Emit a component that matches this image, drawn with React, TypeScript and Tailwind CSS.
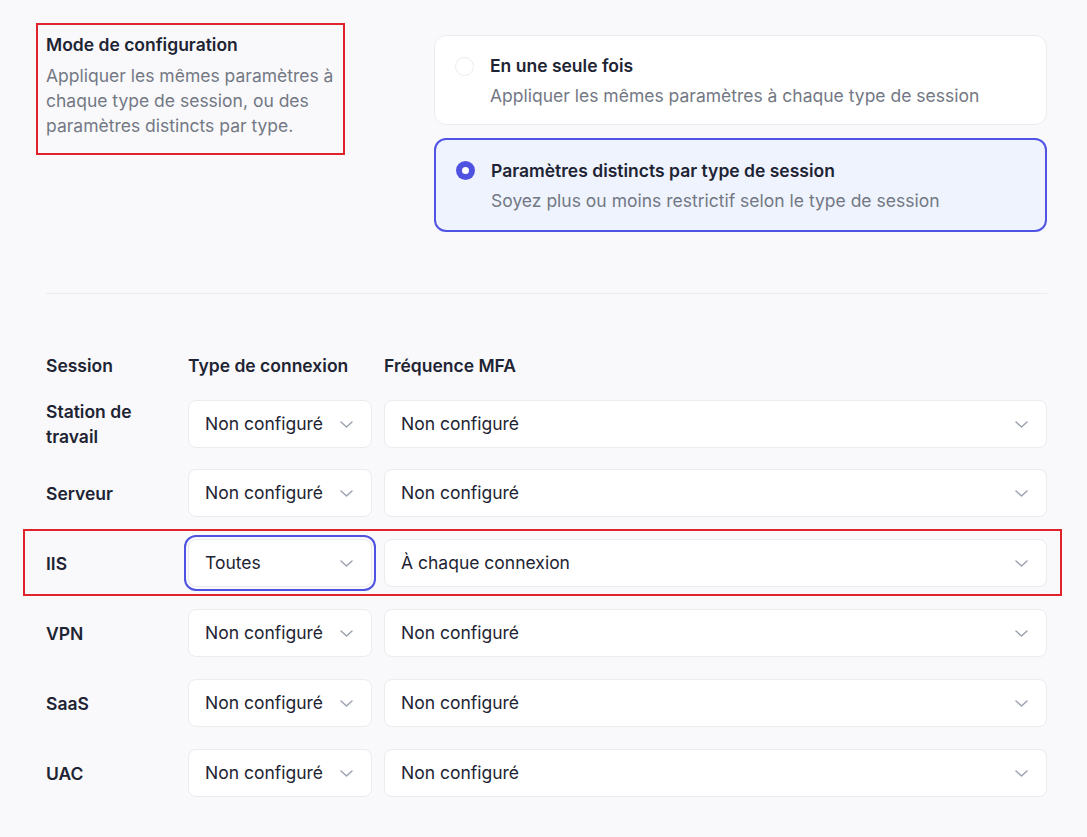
import React from 'react';

const rows = [
  { session: 'Station de travail', type: 'Non configuré', mfa: 'Non configuré' },
  { session: 'Serveur', type: 'Non configuré', mfa: 'Non configuré' },
  { session: 'IIS', type: 'Toutes', mfa: 'À chaque connexion', active: true },
  { session: 'VPN', type: 'Non configuré', mfa: 'Non configuré' },
  { session: 'SaaS', type: 'Non configuré', mfa: 'Non configuré' },
  { session: 'UAC', type: 'Non configuré', mfa: 'Non configuré' },
];

function Chevron() {
  return (
    <svg width="13" height="7" viewBox="0 0 13 7" fill="none" className="shrink-0">
      <polyline points="1,1 6.5,6 12,1" stroke="#9ca3af" strokeWidth="1.5" strokeLinecap="round" strokeLinejoin="round" />
    </svg>
  );
}

function Select({ value, focused }: { value: string; focused?: boolean }) {
  return (
    <div
      className={`h-[48px] flex items-center justify-between pl-4 pr-[18px] bg-white border border-[#ebecf0] rounded-lg text-[17.5px] text-[#1e2433] ${
        focused ? 'ring-2 ring-[#4f52e0] ring-offset-2 ring-offset-[#f9f9fb] rounded-[9px]' : ''
      }`}
    >
      <span>{value}</span>
      <Chevron />
    </div>
  );
}

export default function App() {
  return (
    <div className="min-h-screen bg-[#f9f9fb] pr-[40px] pb-10" style={{ fontFamily: 'Inter, "Noto Sans", sans-serif' }}>
      <div className="flex pl-[36px] pt-[23px]">
        <div className="w-[309px] h-[132px] border-2 border-[#e0222a] pl-[8px] pt-[8px]">
          <h2 className="text-[17.5px] font-semibold text-[#1e2433] leading-[24px]">Mode de configuration</h2>
          <p className="text-[17.5px] text-[#737884] leading-[25px] mt-[6px]">
            Appliquer les mêmes paramètres à chaque type de session, ou des paramètres distincts par type.
          </p>
        </div>

        <div className="ml-auto w-[613px] mt-[12px] flex flex-col gap-[13px]">
          <div className="h-[90px] bg-white border border-[#ebecf0] rounded-xl flex items-start pl-[20px] pt-[18px]">
            <span className="mt-[3px] w-[19px] h-[19px] rounded-full border border-[#ebecf0] bg-white shrink-0" />
            <div className="ml-[16px]">
              <div className="text-[17.5px] font-semibold text-[#1e2433] leading-[23px]">En une seule fois</div>
              <div className="text-[17.5px] text-[#737884] leading-[23px] mt-[7px]">Appliquer les mêmes paramètres à chaque type de session</div>
            </div>
          </div>
          <div className="h-[94px] bg-[#eef3fe] border-2 border-[#5153e4] rounded-xl flex items-start pl-[20px] pt-[19px]">
            <span className="mt-[2px] w-[19px] h-[19px] rounded-full bg-[#4f52e0] flex items-center justify-center shrink-0">
              <span className="w-[7px] h-[7px] rounded-full bg-white" />
            </span>
            <div className="ml-[16px]">
              <div className="text-[17.5px] font-semibold text-[#1e2433] leading-[23px]">Paramètres distincts par type de session</div>
              <div className="text-[17.5px] text-[#737884] leading-[23px] mt-[7px]">Soyez plus ou moins restrictif selon le type de session</div>
            </div>
          </div>
        </div>
      </div>

      <div className="ml-[46px] mt-[61px] border-t border-[#ebecf0]" />

      <div className="pl-[46px] mt-[60px] flex flex-col gap-[22px]">
        <div className="grid grid-cols-[130px_184px_1fr] gap-x-3 text-[17.5px] font-semibold text-[#1e2433] leading-[24px] -mb-[1px]">
          <div>Session</div>
          <div>Type de connexion</div>
          <div>Fréquence MFA</div>
        </div>

        {rows.map((r) => (
          <div key={r.session} className="relative h-[48px] grid grid-cols-[130px_184px_1fr] gap-x-3 items-center">
            {r.active && (
              <div className="absolute -left-[23px] -right-[15px] -top-[10px] -bottom-[9px] border-2 border-[#e0222a] pointer-events-none" />
            )}
            <div className="text-[17.5px] font-semibold text-[#1e2433] leading-[25px]">{r.session}</div>
            <Select value={r.type} focused={r.active} />
            <Select value={r.mfa} />
          </div>
        ))}
      </div>
    </div>
  );
}
